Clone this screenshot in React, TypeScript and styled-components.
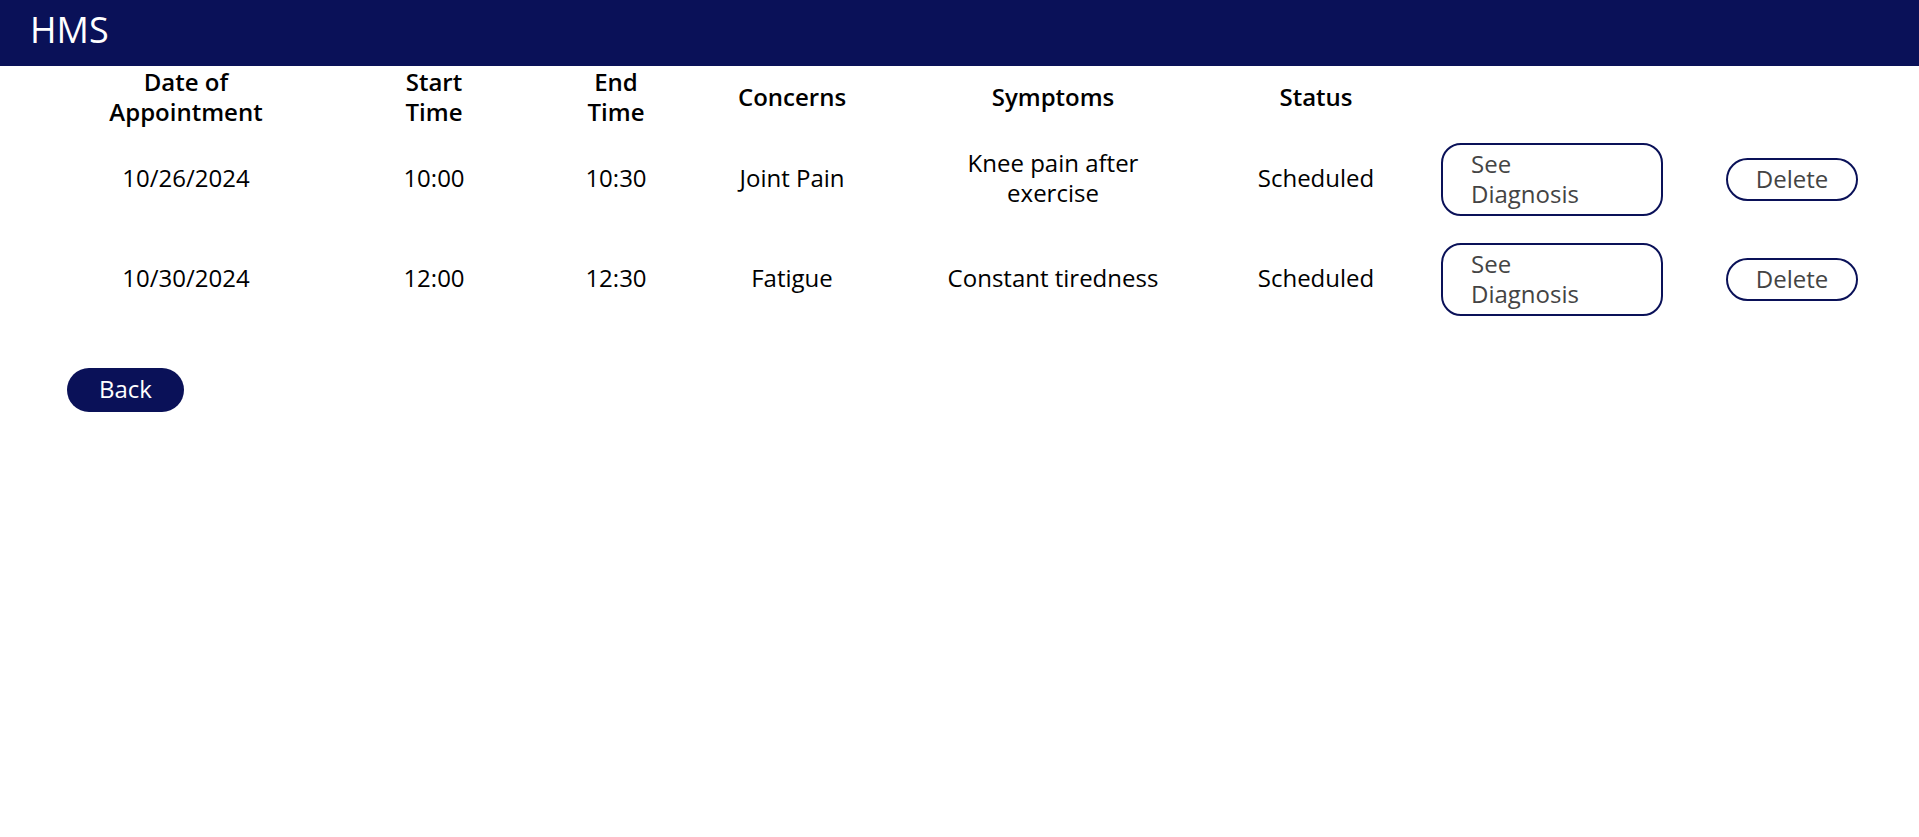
import React from "react";
import styled, { createGlobalStyle } from "styled-components";

const NAVY = "#0a1158";
const COLUMNS = "248px 248px 116px 236px 286px 240px 232px 248px";

const GlobalStyle = createGlobalStyle`
  html, body {
    margin: 0;
    padding: 0;
    background: #ffffff;
  }
  body {
    font-family: "Open Sans", "Noto Sans", sans-serif;
    color: #000000;
  }
  * {
    box-sizing: border-box;
  }
`;

const Page = styled.div`
  width: 100%;
  min-height: 837px;
  background: #ffffff;
`;

const TopBar = styled.header`
  height: 66px;
  background: ${NAVY};
  display: flex;
  align-items: flex-start;
  padding: 12px 30px 0;
`;

const Brand = styled.h1`
  margin: 0;
  font-size: 36px;
  line-height: 1;
  font-weight: 400;
  color: #ffffff;
`;

const Table = styled.section`
  display: flex;
  flex-direction: column;
`;

const Row = styled.div<{ $height: number }>`
  display: grid;
  grid-template-columns: ${COLUMNS};
  height: ${(p) => p.$height}px;
  padding-left: 62px;
  align-items: center;
  justify-items: center;
  text-align: center;
`;

const HeadCell = styled.div`
  font-size: 24px;
  line-height: 30px;
  font-weight: 600;
  color: #000000;
  padding-bottom: 2px;
`;

const Cell = styled.div`
  font-size: 24px;
  line-height: 30px;
  font-weight: 400;
  color: #000000;
  padding-bottom: 2px;
`;

const DiagnosisButton = styled.button`
  width: 222px;
  height: 73px;
  padding: 0 28px;
  border: 2px solid ${NAVY};
  border-radius: 20px;
  background: #ffffff;
  color: #444444;
  font-family: inherit;
  font-size: 24px;
  line-height: 30px;
  text-align: left;
  cursor: pointer;
`;

const DeleteButton = styled.button`
  height: 43px;
  padding: 0 28px;
  border: 2px solid ${NAVY};
  border-radius: 999px;
  background: #ffffff;
  color: #444444;
  font-family: inherit;
  font-size: 24px;
  line-height: 30px;
  cursor: pointer;
`;

const Footer = styled.div`
  padding: 39px 0 0 67px;
`;

const BackButton = styled.button`
  height: 44px;
  padding: 0 32px 2px;
  border: none;
  border-radius: 999px;
  background: ${NAVY};
  color: #ffffff;
  font-family: inherit;
  font-size: 24px;
  line-height: 30px;
  cursor: pointer;
`;

type Appointment = {
  date: string;
  start: string;
  end: string;
  concern: string;
  symptoms: string[];
  status: string;
};

const appointments: Appointment[] = [
  {
    date: "10/26/2024",
    start: "10:00",
    end: "10:30",
    concern: "Joint Pain",
    symptoms: ["Knee pain after", "exercise"],
    status: "Scheduled",
  },
  {
    date: "10/30/2024",
    start: "12:00",
    end: "12:30",
    concern: "Fatigue",
    symptoms: ["Constant tiredness"],
    status: "Scheduled",
  },
];

const Lines: React.FC<{ lines: string[] }> = ({ lines }) => (
  <>
    {lines.map((l, i) => (
      <React.Fragment key={i}>
        {i > 0 && <br />}
        {l}
      </React.Fragment>
    ))}
  </>
);

export default function App() {
  return (
    <Page>
      <GlobalStyle />
      <TopBar>
        <Brand>HMS</Brand>
      </TopBar>
      <Table>
        <Row $height={63}>
          <HeadCell>
            <Lines lines={["Date of", "Appointment"]} />
          </HeadCell>
          <HeadCell>
            <Lines lines={["Start", "Time"]} />
          </HeadCell>
          <HeadCell>
            <Lines lines={["End", "Time"]} />
          </HeadCell>
          <HeadCell>Concerns</HeadCell>
          <HeadCell>Symptoms</HeadCell>
          <HeadCell>Status</HeadCell>
          <HeadCell />
          <HeadCell />
        </Row>
        {appointments.map((a) => (
          <Row $height={100} key={a.date}>
            <Cell>{a.date}</Cell>
            <Cell>{a.start}</Cell>
            <Cell>{a.end}</Cell>
            <Cell>{a.concern}</Cell>
            <Cell>
              <Lines lines={a.symptoms} />
            </Cell>
            <Cell>{a.status}</Cell>
            <DiagnosisButton>
              <Lines lines={["See", "Diagnosis"]} />
            </DiagnosisButton>
            <DeleteButton>Delete</DeleteButton>
          </Row>
        ))}
      </Table>
      <Footer>
        <BackButton>Back</BackButton>
      </Footer>
    </Page>
  );
}
